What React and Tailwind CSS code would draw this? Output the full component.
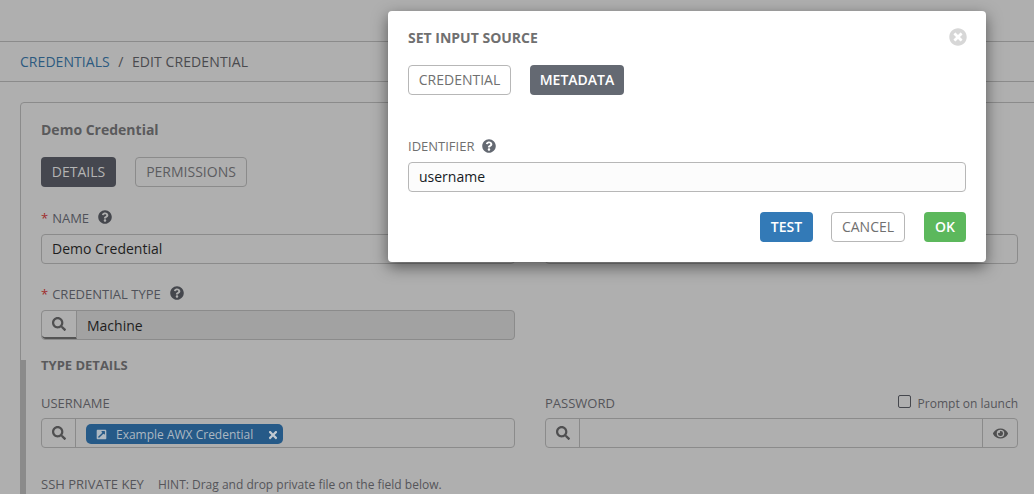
import React from "react";
import { FaQuestionCircle, FaSearch, FaTimesCircle, FaTimes, FaExternalLinkSquareAlt, FaEye } from "react-icons/fa";

const font = { fontFamily: '"Open Sans", sans-serif' };

function Help({ cls = "text-[#45474d]" }) {
  return <FaQuestionCircle className={`${cls} text-[14px]`} />;
}

function Label({ req, text, help }) {
  return (
    <div className="flex items-center h-[20px] mb-[6px] pt-[2px] text-[13px] text-[#50525a]">
      {req && <span className="text-[#a02c2c] mr-[4px]">*</span>}
      <span>{text}</span>
      {help && <span className="ml-[9px] -mt-[4px]"><Help /></span>}
    </div>
  );
}

function SearchAddon({ w = "w-[35px]", extra = "" }) {
  return (
    <div className={`${w} ${extra} h-full flex items-center justify-center border-r border-[#8a8a8a] text-[#4f4f50] shrink-0`}>
      <FaSearch className="text-[14px]" />
    </div>
  );
}

export default function App() {
  return (
    <div style={font} className="relative w-[1034px] h-[494px] overflow-hidden bg-[#afafaf] text-[#4a4a4e]">
      <div className="h-[42px] border-b border-[#8b8b8b]" />
      <div className="h-[40px] border-b border-[#8b8b8b] flex items-center pl-[20px] text-[14px]">
        <span className="text-[#2c5a80] tracking-[0.05px]">CREDENTIALS</span>
        <span className="mx-[8.5px] text-[#4a4a4e]">/</span>
        <span className="text-[#4a4a4e] tracking-[0.1px]">EDIT CREDENTIAL</span>
      </div>

      <div className="relative ml-[20px] mt-[20px] w-[1020px] h-[420px] border border-[#8b8b8b] rounded-[4px] pl-[20px] pr-[21px] pt-[16px]">
        <div className="h-[20px] flex items-center text-[14px] font-bold text-[#5a5a5c]">Demo Credential</div>
        <div className="flex gap-[19px] mt-[18px]">
          <div className="h-[30px] w-[75px] pb-[2px] rounded-[4px] bg-[#45474f] text-[#b4b4b4] text-[14px] flex items-center justify-center">DETAILS</div>
          <div className="h-[30px] w-[112px] pb-[2px] rounded-[4px] border border-[#8b8b8b] text-[#5c5c5f] text-[14px] flex items-center justify-center">PERMISSIONS</div>
        </div>

        <div className="grid grid-cols-[474px_473px] gap-x-[30px] mt-[21px]">
          <div>
            <Label req text="NAME" help />
            <div className="h-[30px] pb-[2px] rounded-[4px] border border-[#8b8b8b] flex items-center pl-[10px] text-[14px] text-[#1e1e1e]">Demo Credential</div>
          </div>
          <div className="pt-[26px]">
            <div className="h-[30px] rounded-[4px] border border-[#8b8b8b]" />
          </div>
        </div>

        <div className="mt-[20px] w-[474px]">
          <Label req text="CREDENTIAL TYPE" help />
          <div className="h-[30px] rounded-[4px] border border-[#8b8b8b] bg-[#a2a2a2] flex items-center text-[14px] text-[#1e1e1e] overflow-hidden">
            <div className="w-[35px] h-full flex items-center justify-center border-r border-[#8a8a8a] border-b-2 border-b-[#555] bg-[#afafaf] rounded-l-[4px] text-[#4f4f50] shrink-0">
              <FaSearch className="text-[14px]" />
            </div>
            <span className="pl-[10px]">Machine</span>
          </div>
        </div>

        <div className="absolute left-0 top-[257px] bottom-0 w-[5px] bg-[#8b8b8b]" />

        <div className="mt-[15px] h-[20px] pt-[2px] flex items-center text-[13px] font-bold text-[#5a5a5c]">TYPE DETAILS</div>

        <div className="grid grid-cols-[474px_473px] gap-x-[30px] mt-[18px]">
          <div>
            <div className="h-[20px] mb-[5px] pt-[2px] flex items-center text-[13px] text-[#55555a]">USERNAME</div>
            <div className="h-[30px] rounded-[4px] border border-[#8b8b8b] flex items-center">
              <SearchAddon w="w-[34px]" />
              <div className="ml-[10px] mt-[2px] h-[20px] w-[197px] pt-[1px] rounded-[5px] bg-[#265a88] text-[#adb8c2] text-[12px] flex items-center pl-[10px] pr-[4px]">
                <FaExternalLinkSquareAlt className="text-[11px] shrink-0" />
                <span className="ml-[9px]">Example AWX Credential</span>
                <FaTimes className="ml-auto text-[12px] text-[#c2cad2]" />
              </div>
            </div>
          </div>
          <div>
            <div className="h-[20px] mb-[5px] pt-[2px] flex items-center justify-between text-[13px] text-[#55555a]">
              <span>PASSWORD</span>
              <span className="flex items-center text-[12px]">
                <span className="w-[13px] h-[13px] border border-[#45474d] rounded-[2px] mr-[7px] -mt-[5px]" />
                Prompt on launch
              </span>
            </div>
            <div className="h-[30px] rounded-[4px] border border-[#8b8b8b] flex items-center">
              <SearchAddon w="w-[34px]" />
              <div className="flex-1" />
              <div className="w-[35px] h-full flex items-center justify-center border-l border-[#8a8a8a] text-[#4f4f50]">
                <FaEye className="text-[15px]" />
              </div>
            </div>
          </div>
        </div>

        <div className="mt-[27px] h-[20px] flex items-center text-[13px] text-[#55555a]">
          <span>SSH PRIVATE KEY</span>
          <span className="ml-[14px] text-[12px]">HINT: Drag and drop private file on the field below.</span>
        </div>
      </div>

      <div className="absolute left-[388px] top-[11px] w-[598px] h-[251px] bg-white rounded-[4px] shadow-[0_5px_15px_rgba(0,0,0,0.5)] px-[20px] pt-[16px]">
        <div className="flex items-center justify-between h-[20px]">
          <span className="text-[14px] font-bold text-[#707070]">SET INPUT SOURCE</span>
          <FaTimesCircle className="text-[#d7d7d7] text-[18px] -mr-[1px]" />
        </div>
        <div className="flex gap-[19px] mt-[18px]">
          <div className="h-[30px] w-[103px] pb-[2px] rounded-[4px] border border-[#b7b7b7] text-[#707070] text-[14px] flex items-center justify-center">CREDENTIAL</div>
          <div className="h-[30px] w-[94px] pb-[2px] rounded-[4px] bg-[#646972] text-white text-[14px] font-semibold flex items-center justify-center">METADATA</div>
        </div>
        <div className="flex items-center h-[20px] mt-[42px] text-[13px] text-[#707070]">
          <span>IDENTIFIER</span>
          <FaQuestionCircle className="ml-[8px] -mt-[2px] text-[#646972] text-[14px]" />
        </div>
        <div className="mt-[5px] h-[30px] pb-[2px] rounded-[4px] border border-[#b7b7b7] bg-[#fcfcfc] flex items-center pl-[10px] text-[14px] text-[#161b1f]">username</div>
        <div className="flex justify-end mt-[20px]">
          <div className="h-[30px] w-[53px] pb-[2px] rounded-[4px] bg-[#337ab7] text-white text-[14px] font-semibold flex items-center justify-center">TEST</div>
          <div className="h-[30px] w-[74px] pb-[2px] ml-[18px] rounded-[4px] border border-[#b7b7b7] text-[#707070] text-[14px] flex items-center justify-center">CANCEL</div>
          <div className="h-[30px] w-[42px] pb-[2px] ml-[19px] rounded-[4px] bg-[#5cb85c] text-white text-[14px] font-semibold flex items-center justify-center">OK</div>
        </div>
      </div>
    </div>
  );
}
